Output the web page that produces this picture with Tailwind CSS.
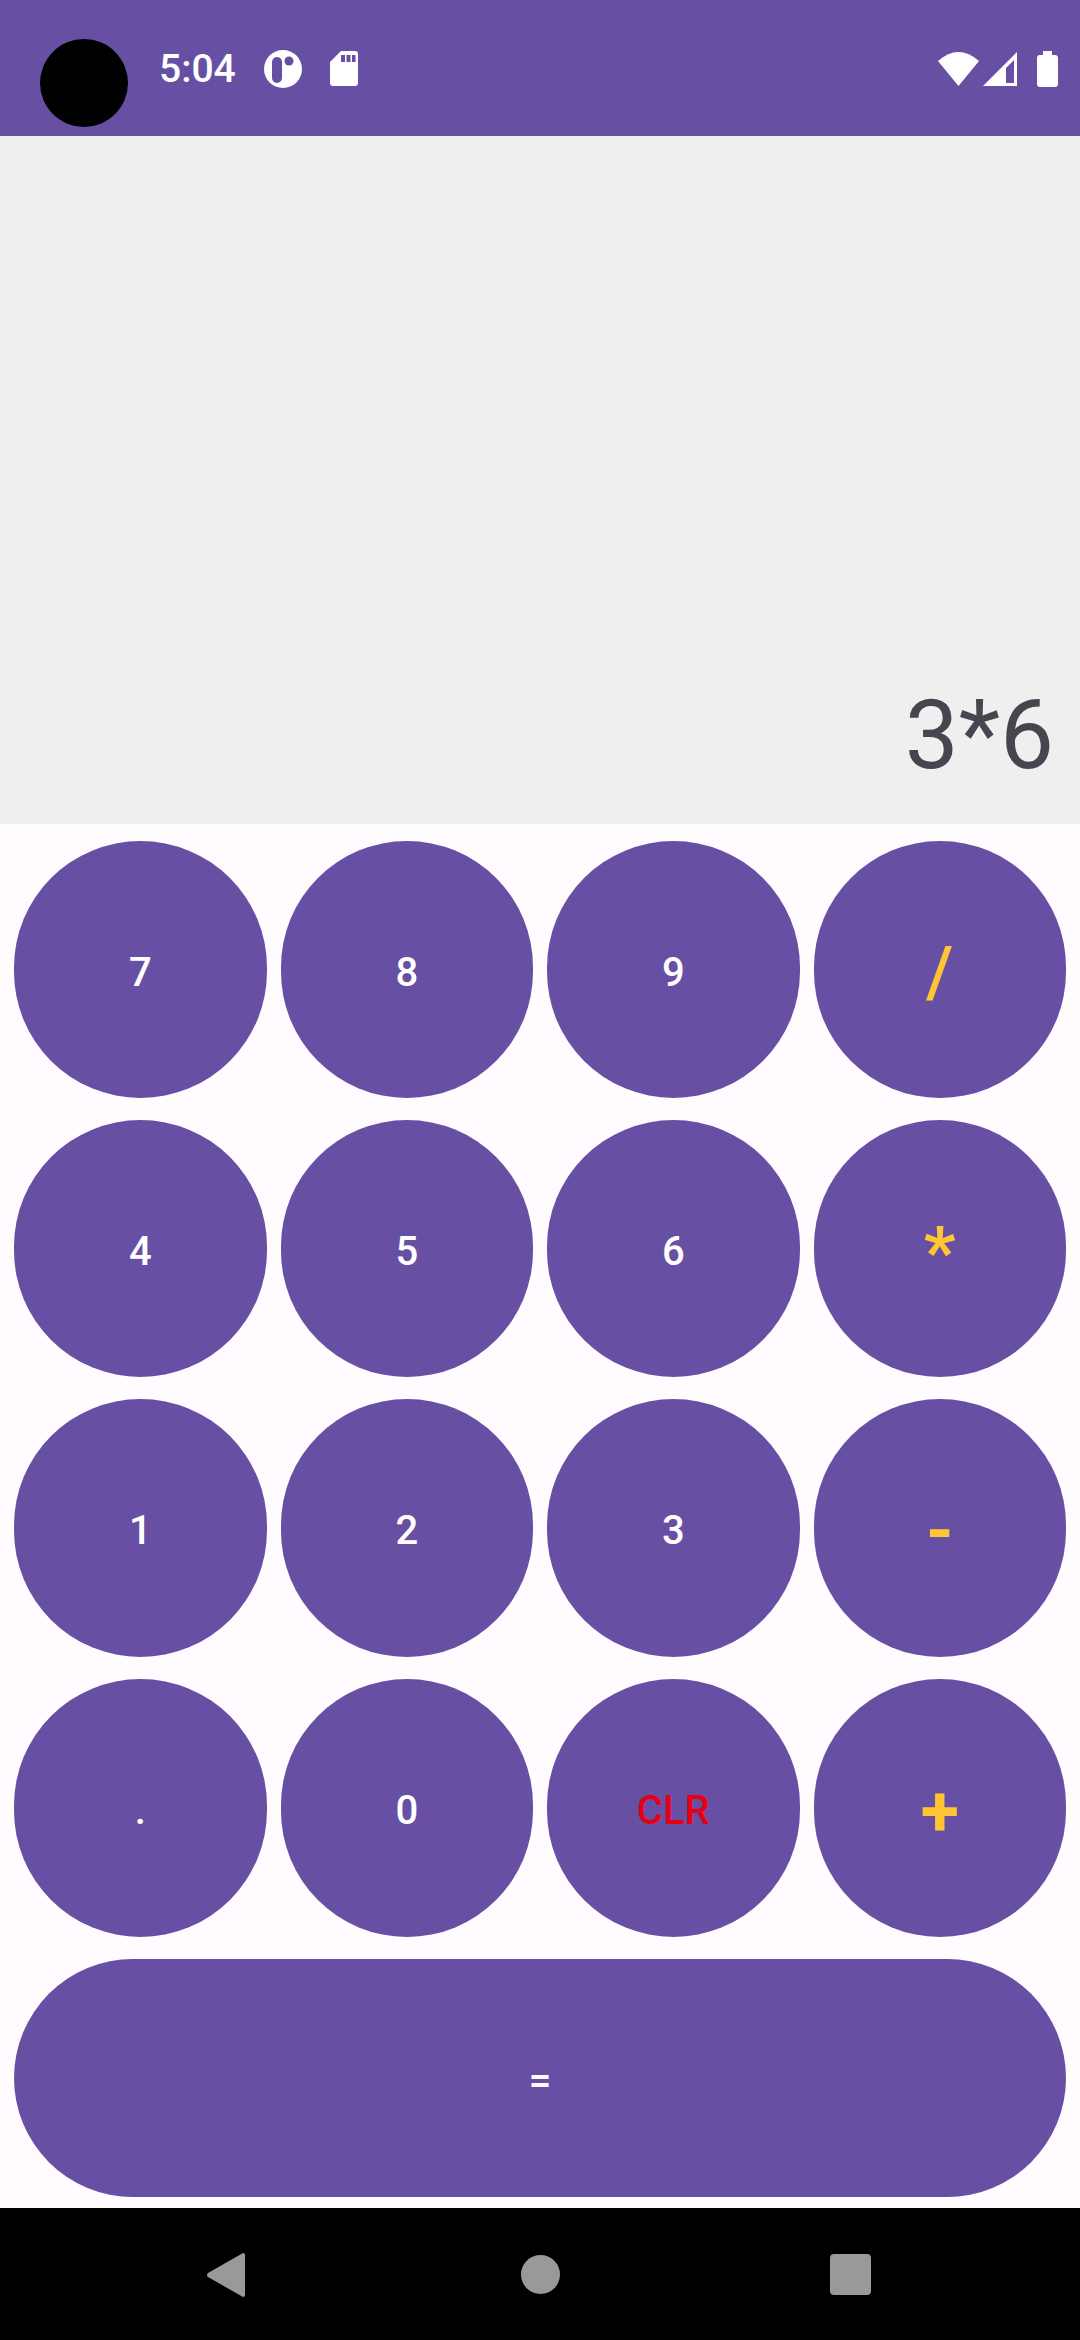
<!DOCTYPE html>
<html lang="en">
<head>
    <meta charset="UTF-8">
    <meta name="viewport" content="width=device-width, initial-scale=1.0">
    <title>Calculator</title>
    <script src="https://cdn.jsdelivr.net/npm/@tailwindcss/browser@4"></script>
</head>
<body class="bg-[#fffbfe] font-['Roboto',sans-serif]">
<div class="w-[1080px] h-[2340px] flex flex-col overflow-hidden">

    <!-- status bar -->
    <div class="h-[136px] bg-[#6750a4] flex items-center relative shrink-0">
        <div class="absolute left-[40px] top-[39px] w-[88px] h-[88px] rounded-full bg-black"></div>
        <div class="ml-[159px] mt-[2px] text-white text-[39px] font-medium leading-none">5:04</div>
        <svg class="ml-[28px] mt-[1px]" width="38" height="38" viewBox="0 0 38 38">
            <circle cx="19" cy="19" r="19" fill="#fff"/>
            <rect x="8" y="7" width="10" height="26" rx="5" fill="#6750a4"/>
            <circle cx="25" cy="11" r="4.500" fill="#6750a4"/>
        </svg>
        <svg class="ml-[28px] mt-[1px]" width="28" height="35" viewBox="0 0 28 35">
            <path d="M11 0H25a3 3 0 0 1 3 3V32a3 3 0 0 1-3 3H3a3 3 0 0 1-3-3V11Z" fill="#fff"/>
            <rect x="11" y="4" width="4" height="7" fill="#6750a4"/>
            <rect x="16.500" y="4" width="4" height="7" fill="#6750a4"/>
            <rect x="22" y="4" width="3.500" height="7" fill="#6750a4"/>
        </svg>
        <div class="ml-auto mr-[22px] mt-[2px] flex items-center gap-[4px]">
            <svg width="41" height="34" viewBox="0 0 41 34">
                <path d="M0 9Q20.500-9 41 9L20.500 34Z" fill="#fff"/>
            </svg>
            <svg width="34" height="34" viewBox="0 0 34 34">
                <path d="M34 0V34H0ZM31 8 23 16V31H31Z" fill="#fff" fill-rule="evenodd"/>
            </svg>
            <svg class="ml-[16px]" width="21" height="36" viewBox="0 0 21 36">
                <path d="M6 0H15V4H18a3 3 0 0 1 3 3V33a3 3 0 0 1-3 3H3a3 3 0 0 1-3-3V7a3 3 0 0 1 3-3H6Z" fill="#fff"/>
            </svg>
        </div>
    </div>

    <!-- display -->
    <div class="h-[688px] bg-[#efefef] flex items-end justify-end pr-[26px] pb-[31px] shrink-0">
        <span class="text-[#49454f] text-[96px] leading-[115px]">3*6</span>
    </div>

    <!-- keypad -->
    <div class="flex-1 px-[14px] pt-[17px] grid grid-cols-4 gap-x-[14px] gap-y-[22px] grid-rows-[257px_257px_258px_258px_238px] content-start">
        <button class="rounded-full bg-[#6750a4] pt-[6px] text-white text-[40px] font-medium">7</button>
        <button class="rounded-full bg-[#6750a4] pt-[6px] text-white text-[40px] font-medium">8</button>
        <button class="rounded-full bg-[#6750a4] pt-[6px] text-white text-[40px] font-medium">9</button>
        <button class="rounded-full bg-[#6750a4] pt-[6px] text-[#ffc533] text-[70px] font-medium">/</button>

        <button class="rounded-full bg-[#6750a4] pt-[6px] text-white text-[40px] font-medium">4</button>
        <button class="rounded-full bg-[#6750a4] pt-[6px] text-white text-[40px] font-medium">5</button>
        <button class="rounded-full bg-[#6750a4] pt-[6px] text-white text-[40px] font-medium">6</button>
        <button class="rounded-full bg-[#6750a4] pt-[8px] text-[#ffc533] text-[70px] font-bold">*</button>

        <button class="rounded-full bg-[#6750a4] pt-[6px] text-white text-[40px] font-medium">1</button>
        <button class="rounded-full bg-[#6750a4] pt-[6px] text-white text-[40px] font-medium">2</button>
        <button class="rounded-full bg-[#6750a4] pt-[6px] text-white text-[40px] font-medium">3</button>
        <button class="rounded-full bg-[#6750a4] pt-[6px] text-[#ffc533] text-[70px] font-bold">-</button>

        <button class="rounded-full bg-[#6750a4] pt-[6px] text-white text-[40px] font-medium">.</button>
        <button class="rounded-full bg-[#6750a4] pt-[6px] text-white text-[40px] font-medium">0</button>
        <button class="rounded-full bg-[#6750a4] pt-[6px] text-[#e60012] text-[40px] font-medium">CLR</button>
        <button class="rounded-full bg-[#6750a4] pt-[6px] text-[#ffc533] text-[70px] font-bold">+</button>

        <button class="col-span-4 rounded-full bg-[#6750a4] pt-[6px] text-white text-[40px] font-medium">=</button>
    </div>

    <!-- nav bar -->
    <div class="h-[132px] bg-black flex items-center justify-center relative shrink-0">
        <svg class="absolute left-[207px] top-[44px]" width="38" height="46" viewBox="0 0 38 46">
            <path d="M36 1a2 2 0 0 1 2 2V43a2 2 0 0 1-2 2L1 25a2.500 2.500 0 0 1 0-4Z" fill="#999"/>
        </svg>
        <div class="w-[39px] h-[39px] rounded-full bg-[#999]"></div>
        <div class="absolute left-[830px] top-[46px] w-[41px] h-[41px] rounded-[4px] bg-[#999]"></div>
    </div>
</div>
</body>
</html>
